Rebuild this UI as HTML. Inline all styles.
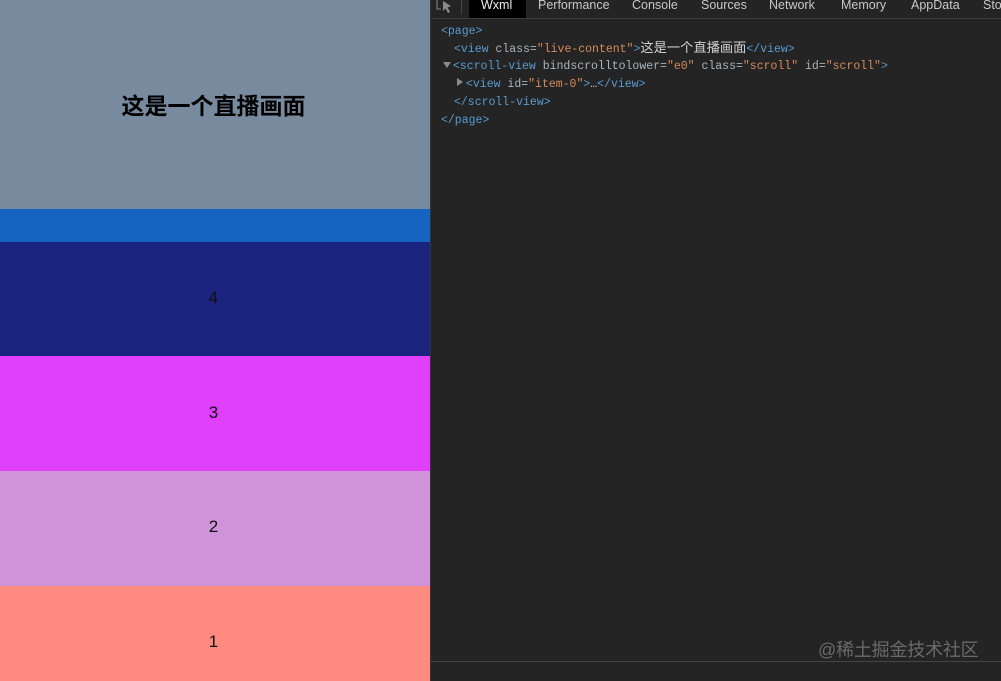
<!DOCTYPE html>
<html>
<head>
<meta charset="utf-8">
<style>
html,body{margin:0;padding:0;width:1001px;height:681px;overflow:hidden;background:#242424}
.a{position:absolute}
#left{left:0;top:0;width:430px;height:681px;overflow:hidden}
.band{position:absolute;left:0;width:430px}
.num{position:absolute;left:0;width:427px;text-align:center;font:17px/20px "Liberation Sans",sans-serif;color:#111}
#title{position:absolute;left:0;top:91px;width:427px;text-align:center;font:bold 23px/30px "Liberation Sans","Noto Sans CJK SC",sans-serif;color:#000}
#right{left:430px;top:0;width:571px;height:681px;background:#242424;overflow:hidden;border-left:1px solid #333;box-sizing:border-box}
.tab{position:absolute;top:-3px;font:12.5px/16px "Liberation Sans",sans-serif;color:#c8c8c8;white-space:nowrap}
.code{position:absolute;font:11.5px/17px "Liberation Mono","Noto Sans CJK SC",monospace;white-space:pre;color:#5a9bcf}
.g{color:#a9b4bd}.o{color:#d68a5c}.w{color:#d0d0d0}
.zh{font-family:"Liberation Sans","Noto Sans CJK SC",sans-serif;font-size:13.25px;line-height:0;color:#d0d0d0}
</style>
</head>
<body>
<div id="left" class="a">
  <div class="band" style="top:0;height:209px;background:#778a9e"></div>
  <div class="band" style="top:209px;height:33px;background:#1565c0"></div>
  <div class="band" style="top:242px;height:114px;background:#1a237e"></div>
  <div class="band" style="top:356px;height:115px;background:#e040fb"></div>
  <div class="band" style="top:471px;height:115px;background:#ce93d8"></div>
  <div class="band" style="top:586px;height:95px;background:#ff8a80"></div>
  <div id="title">这是一个直播画面</div>
  <div class="num" style="top:288px">4</div>
  <div class="num" style="top:403px">3</div>
  <div class="num" style="top:517px">2</div>
  <div class="num" style="top:632px">1</div>
</div>
<div id="right" class="a">
  <div class="a" style="left:0;top:18px;width:570px;height:1px;background:#3c3c3c"></div>
  <svg class="a" style="left:5px;top:0" width="18" height="14" viewBox="0 0 18 14" fill="none"><path d="M1 0V9H5" stroke="#777" stroke-width="1.2"/><path d="M7 1L15 6L11.5 7.5L14 12L12 13L9.5 8.5L7 11Z" fill="#8a8a8a"/></svg>
  <div class="a" style="left:30px;top:0;width:1px;height:14px;background:#444"></div>
  <div class="a" style="left:38px;top:0;width:57px;height:18px;background:#000"></div>
  <div class="tab" style="left:50px;color:#eee">Wxml</div>
  <div class="tab" style="left:107px">Performance</div>
  <div class="tab" style="left:201px">Console</div>
  <div class="tab" style="left:270px">Sources</div>
  <div class="tab" style="left:338px">Network</div>
  <div class="tab" style="left:410px">Memory</div>
  <div class="tab" style="left:480px">AppData</div>
  <div class="tab" style="left:552px">Storage</div>

  <div class="code" style="left:10px;top:23px">&lt;page&gt;</div>
  <div class="code" style="left:23px;top:41px">&lt;view <span class="g">class=</span><span class="o">"live-content"</span>&gt;<span class="zh">这是一个直播画面</span>&lt;/view&gt;</div>
  <div class="a" style="left:12px;top:62px;width:0;height:0;border-left:4px solid transparent;border-right:4px solid transparent;border-top:6px solid #8a8a8a"></div>
  <div class="code" style="left:22px;top:58px">&lt;scroll-view <span class="g">bindscrolltolower=</span><span class="o">"e0"</span> <span class="g">class=</span><span class="o">"scroll"</span> <span class="g">id=</span><span class="o">"scroll"</span>&gt;</div>
  <div class="a" style="left:26px;top:78px;width:0;height:0;border-top:4px solid transparent;border-bottom:4px solid transparent;border-left:6px solid #8a8a8a"></div>
  <div class="code" style="left:35px;top:76px">&lt;view <span class="g">id=</span><span class="o">"item-0"</span>&gt;<span class="w">…</span>&lt;/view&gt;</div>
  <div class="code" style="left:23px;top:94px">&lt;/scroll-view&gt;</div>
  <div class="code" style="left:10px;top:112px">&lt;/page&gt;</div>

  <div class="a" style="left:0;top:661px;width:571px;height:1px;background:#444"></div>
  <div class="a" style="left:387px;top:638px;font:18px/24px 'Liberation Sans','Noto Sans CJK SC',sans-serif;color:#6a6a6a;white-space:nowrap;letter-spacing:-.2px">@稀土掘金技术社区</div>
</div>
</body>
</html>
